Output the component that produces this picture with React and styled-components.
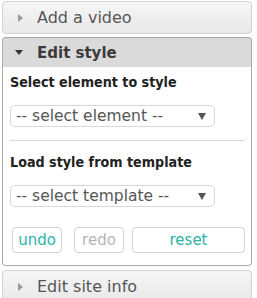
import React from "react";
import styled, { createGlobalStyle, css } from "styled-components";

const Global = createGlobalStyle`
  html, body { margin: 0; padding: 0; background: #fff; }
  body { font-family: "DejaVu Sans", Verdana, sans-serif; }
`;

const Accordion = styled.div`
  width: 250px;
  margin: 1px 0 0 2px;
  display: flex;
  flex-direction: column;
`;

const Header = styled.div`
  box-sizing: border-box;
  display: flex;
  align-items: center;
  ${(p) =>
    p.$active
      ? css`
          height: 30px;
          margin-top: 3px;
          background: #dadada;
          border: 1px solid #aaa;
          border-bottom: none;
          border-radius: 4px 4px 0 0;
          color: #3e3a3a;
          font-weight: bold;
          font-size: 15px;
        `
      : css`
          height: 33px;
          margin-top: ${p.$first ? 0 : 4}px;
          background: linear-gradient(#f6f6f6 0%, #efefef 50%, #e8e8e8 100%);
          border: 1px solid #d3d3d3;
          border-radius: 4px;
          color: #555;
          font-size: 16px;
        `}
`;

const IconBox = styled.span`
  width: 34px;
  display: flex;
  padding-left: ${(p) => (p.$down ? 12 : 15)}px;
  box-sizing: border-box;
`;

const Content = styled.div`
  box-sizing: border-box;
  border: 1px solid #aaa;
  border-top: none;
  border-radius: 0 0 4px 4px;
  background: #fff;
  padding: 6px 6px 12px 7px;
  height: 199px;
`;

const Title = styled.div`
  font-family: "DejaVu Sans Condensed", "DejaVu Sans", sans-serif;
  font-stretch: condensed;
  font-weight: bold;
  font-size: 14.2px;
  line-height: 19px;
  color: #222;
  margin-top: ${(p) => p.$mt || 0}px;
`;

const Select = styled.div`
  box-sizing: border-box;
  width: 205px;
  height: 22px;
  margin-top: 13px;
  border: 1px solid #d8d8d8;
  border-radius: 5px;
  display: flex;
  align-items: center;
  justify-content: space-between;
  padding: 0 8px 0 5px;
  font-size: 15.5px;
  color: #555;
`;

const Rule = styled.div`
  height: 1px;
  background: #d6d6d6;
  margin-top: 13px;
`;

const ButtonRow = styled.div`
  display: flex;
  margin-top: 20px;
  padding-left: 2px;
`;

const Button = styled.div`
  box-sizing: border-box;
  height: 26px;
  width: ${(p) => p.$w}px;
  margin-left: ${(p) => p.$ml || 0}px;
  border: 1px solid #d3d3d3;
  border-radius: 4px;
  display: flex;
  align-items: center;
  justify-content: center;
  font-size: 15px;
  color: ${(p) => (p.$disabled ? "#b5b5b5" : "#2bb3a6")};
`;

const RightTri = () => (
  <svg width="5" height="8" viewBox="0 0 5 8">
    <path d="M0 0 L5 4 L0 8 Z" fill="#999" />
  </svg>
);

const DownTri = () => (
  <svg width="8" height="5" viewBox="0 0 8 5">
    <path d="M0 0 L8 0 L4 5 Z" fill="#333" />
  </svg>
);

const SmallDown = () => (
  <svg width="8" height="7" viewBox="0 0 8 7">
    <path d="M0 0 L8 0 L4 7 Z" fill="#555" />
  </svg>
);

export default function App() {
  return (
    <>
      <Global />
      <Accordion>
        <Header $first>
          <IconBox>
            <RightTri />
          </IconBox>
          Add a video
        </Header>
        <Header $active>
          <IconBox $down>
            <DownTri />
          </IconBox>
          Edit style
        </Header>
        <Content>
          <Title>Select element to style</Title>
          <Select>
            <span>-- select element --</span>
            <SmallDown />
          </Select>
          <Rule />
          <Title $mt={12}>Load style from template</Title>
          <Select>
            <span>-- select template --</span>
            <SmallDown />
          </Select>
          <ButtonRow>
            <Button $w={50}>undo</Button>
            <Button $w={50} $ml={12} $disabled>
              redo
            </Button>
            <Button $w={113} $ml={8}>
              reset
            </Button>
          </ButtonRow>
        </Content>
        <Header>
          <IconBox>
            <RightTri />
          </IconBox>
          Edit site info
        </Header>
      </Accordion>
    </>
  );
}
